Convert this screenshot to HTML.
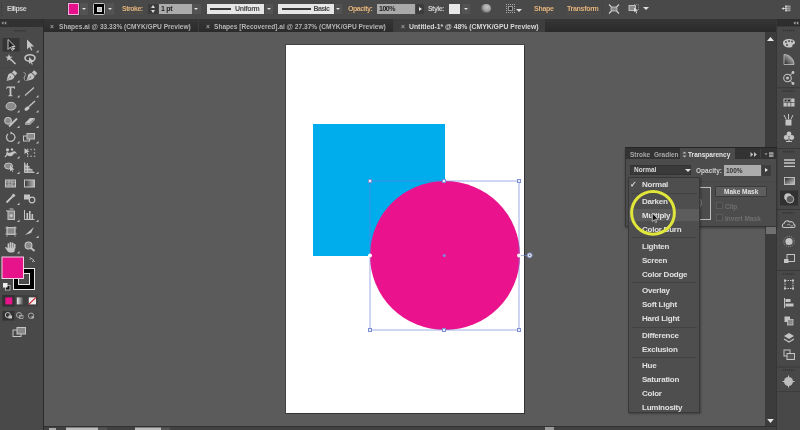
<!DOCTYPE html>
<html><head><meta charset="utf-8">
<style>
*{margin:0;padding:0;box-sizing:border-box}
html,body{width:800px;height:430px;overflow:hidden;background:#575757;font-family:"Liberation Sans",sans-serif;}
.a{position:absolute}
#ctrl{left:0;top:0;width:800px;height:19px;background:#494949}
#tabs{left:0;top:19px;width:800px;height:13px;background:linear-gradient(#363636,#2a2a2a)}
#tool{left:0;top:19px;width:44px;height:411px;background:#494949;border-right:1.5px solid #2c2c2c}
#toolhd{left:0;top:19px;width:43px;height:8px;background:#333}
#canvas{left:44px;top:32px;width:721px;height:394px;background:#5b5b5b}
#artb{left:286px;top:45px;width:238px;height:368px;background:#fff;box-shadow:1px 1px 0 #333,0 0 0 1px #444}
#sq{left:313px;top:124px;width:132px;height:132px;background:#00adec}
#circ{left:370px;top:181px;width:150px;height:149px;border-radius:50%;background:#ea138d}
#vscroll{left:765px;top:32px;width:11px;height:394px;background:#3d3d3d}
#dock{left:776px;top:19px;width:24px;height:411px;background:#4b4b4b;border-left:1px solid #333}
#status{left:44px;top:426px;width:721px;height:4px;background:#3a3a3a}
.t{position:absolute;white-space:nowrap;color:#d8d8d8;font-size:9px;line-height:10px}
#wrap{position:absolute;left:0;top:0;width:800px;height:430px;will-change:transform}
.or{color:#e2b27a}

.dd{background:#535353}
.dd::after{content:"";position:absolute;left:50%;top:50%;margin-left:-2.5px;margin-top:-1px;border-left:2.5px solid transparent;border-right:2.5px solid transparent;border-top:2.5px solid #e0e0e0}
.tri-up{width:0;height:0;border-left:2.5px solid transparent;border-right:2.5px solid transparent;border-bottom:3px solid #d8d8d8}
.tri-dn{width:0;height:0;border-left:2.5px solid transparent;border-right:2.5px solid transparent;border-top:3px solid #d8d8d8}
.tri-dn2{width:0;height:0;border-left:3px solid transparent;border-right:3px solid transparent;border-top:3px solid #e0e0e0}
.tri-r{width:0;height:0;border-top:2.5px solid transparent;border-bottom:2.5px solid transparent;border-left:3px solid #e8e8e8}

.tb{font-size:6.6px;font-weight:bold;color:#b4b4b4;line-height:10px}

.pt{font-size:6.5px;font-weight:bold;line-height:10px}
.mi{font-size:8px;letter-spacing:-0.25px;font-weight:bold;line-height:10px;color:#e0e0e0}
</style></head><body><div id="wrap">
<div id="canvas" class="a"></div>
<div id="artb" class="a"></div>
<div id="sq" class="a"></div>
<div id="circ" class="a"></div>

<!-- selection -->
<svg class="a" style="left:300px;top:170px" width="240" height="170" viewBox="300 170 240 170">
<rect x="370" y="181" width="149" height="149" fill="none" stroke="rgba(100,125,215,0.62)" stroke-width="1"/>
<path d="M520 255.5h7" stroke="rgba(110,135,215,0.6)" stroke-width="1"/>
<g fill="#e8ecf8" stroke="#7d90d6" stroke-width="1">
<rect x="368.5" y="179.5" width="3" height="3"/><rect x="442.5" y="179.5" width="3" height="3"/><rect x="517.5" y="179.5" width="3" height="3"/>
<rect x="368.5" y="328.5" width="3" height="3"/><rect x="442.5" y="328.5" width="3" height="3"/><rect x="517.5" y="328.5" width="3" height="3"/>
</g>
<circle cx="370" cy="255.5" r="2" fill="#fff"/><circle cx="519" cy="255.5" r="2" fill="#f4eef6"/>
<circle cx="529.7" cy="255.3" r="2.4" fill="#dfe5f6" stroke="#8a9dd8" stroke-width=".9"/><circle cx="529.7" cy="255.3" r=".8" fill="#667"/>
<circle cx="444.3" cy="255.5" r="1.6" fill="#8a7fdc"/>
</svg>
<div id="ctrl" class="a"></div>
<!-- control bar -->
<div class="a" style="left:1px;top:3px;width:1px;height:13px;border-left:1px dotted #383838"></div>
<div class="t" style="left:7px;top:4px;font-size:7px;font-weight:bold;letter-spacing:-0.5px;color:#cfcfcf">Ellipse</div>
<div class="a" style="left:68px;top:3px;width:11px;height:12px;background:#e6108b;border:1px solid #efb0dc;box-shadow:0 0 0 .5px #3a3a3a"></div>
<div class="a dd" style="left:80px;top:3px;width:8px;height:12px"></div>
<div class="a" style="left:93px;top:3px;width:12px;height:12px;background:#000;border:1.5px solid #c8c8c8;border-radius:1.5px"></div>
<div class="a" style="left:96.5px;top:6.5px;width:5px;height:5px;background:#b8b8b8;border:.5px solid #ddd"></div>
<div class="a dd" style="left:106px;top:3px;width:8px;height:12px"></div>
<div class="t or" style="left:122px;top:3.5px;font-size:7px;letter-spacing:-0.5px;font-weight:bold;border-bottom:1px dotted #5e5448;line-height:9px">Stroke:</div>
<div class="a" style="left:148px;top:4px;width:10px;height:10px;background:#3c3c3c"></div>
<div class="a tri-up" style="left:151px;top:5px"></div>
<div class="a tri-dn" style="left:151px;top:10px"></div>
<div class="a" style="left:158.5px;top:3.6px;width:33px;height:10.4px;background:#ababab"></div>
<div class="t" style="left:161px;top:3.5px;font-size:7px;letter-spacing:-0.3px;font-weight:bold;color:#222">1 pt</div>
<div class="a dd" style="left:192px;top:4px;width:9px;height:10px"></div>
<div class="a" style="left:207px;top:4px;width:57px;height:10px;background:#e6e6e6"></div>
<div class="a" style="left:210px;top:8px;width:21px;height:2px;background:#3a3a3a"></div>
<div class="t" style="left:235px;top:3.5px;font-size:7px;letter-spacing:-0.35px;font-weight:bold;color:#4a4a4a">Uniform</div>
<div class="a dd" style="left:265px;top:4px;width:8px;height:10px"></div>
<div class="a" style="left:278px;top:4px;width:56px;height:10px;background:#e6e6e6"></div>
<div class="a" style="left:282px;top:8px;width:29px;height:2px;background:#3a3a3a"></div>
<div class="t" style="left:313.5px;top:3.5px;font-size:7px;letter-spacing:-0.6px;font-weight:bold;color:#4a4a4a">Basic</div>
<div class="a dd" style="left:335px;top:4px;width:7px;height:10px"></div>
<div class="t or" style="left:348px;top:3.5px;font-size:7px;letter-spacing:-0.45px;font-weight:bold;border-bottom:1px dotted #5e5448;line-height:9px">Opacity:</div>
<div class="a" style="left:377px;top:4px;width:38px;height:10px;background:#a9a9a9"></div>
<div class="t" style="left:379px;top:3.5px;font-size:7px;letter-spacing:-0.5px;font-weight:bold;color:#222">100%</div>
<div class="a" style="left:416px;top:4px;width:8px;height:10px;background:#3c3c3c"></div>
<div class="a tri-r" style="left:419px;top:7px"></div>
<div class="t" style="left:428px;top:3.5px;font-size:7px;letter-spacing:-0.55px;font-weight:bold;color:#cfcfcf">Style:</div>
<div class="a" style="left:449px;top:4px;width:11px;height:10px;background:#e8e8e8"></div>
<div class="a dd" style="left:462px;top:4px;width:8px;height:10px"></div>
<div class="a" style="left:481px;top:3.5px;width:9.5px;height:9.5px;border-radius:50%;background:radial-gradient(circle at 60% 35%,#c4c4c4,#999 55%,#6a6a6a);box-shadow:inset 1px -1px 1.5px rgba(0,0,0,.35)"></div>
<div class="a" style="left:506px;top:4px;width:9px;height:9px;border:1px dotted #aaa"></div>
<div class="a" style="left:509px;top:7px;width:3px;height:3px;background:#333;box-shadow:0 0 0 1px #999"></div>
<div class="a tri-dn2" style="left:516px;top:8.5px"></div>
<div class="t or" style="left:534px;top:3.5px;font-size:7px;letter-spacing:-0.25px;font-weight:bold;border-bottom:1px dotted #5e5448;line-height:9px">Shape</div>
<div class="t or" style="left:567px;top:3.5px;font-size:7px;letter-spacing:-0.3px;font-weight:bold;border-bottom:1px dotted #5e5448;line-height:9px">Transform</div>
<div class="a" style="left:602px;top:3px;width:1px;height:13px;background:#444"></div>
<svg class="a" style="left:608px;top:4px" width="12" height="10" viewBox="0 0 12 10"><path d="M1 .5l3 3M11 .5l-3 3M1 9.5l3-3M11 9.5l-3-3" stroke="#c8c8c8" stroke-width="1.3"/><rect x="3" y="3" width="6" height="4" rx="1" fill="#8a8a8a" stroke="#c8c8c8" stroke-width=".8"/></svg>
<svg class="a" style="left:628px;top:3px" width="12" height="11" viewBox="0 0 12 11"><rect x="6" y="1.5" width="4.5" height="5.5" fill="none" stroke="#9a9a9a" stroke-width=".8" stroke-dasharray="1 .8"/><rect x="1" y="2.5" width="6.5" height="5" fill="#8a8a8a" stroke="#c8c8c8" stroke-width=".9"/><path d="M6 4.5l4 3.2h-1.8l1 2.3-.9.4-1-2.3-1.3 1.2z" fill="#dcdcdc"/></svg>
<div class="a tri-dn2" style="left:642.5px;top:7px"></div>
<svg class="a" style="left:780px;top:4px" width="12" height="10" viewBox="0 0 12 10"><path d="M1.5 4.5l2.5-1.3v2.6z" fill="#e0e0e0"/><path d="M4 4.5h1" stroke="#bbb" stroke-width="1"/><rect x="5" y="1.5" width="2.6" height="5.8" fill="#d0d0d0"/><rect x="7.9" y="1.5" width="2.6" height="5.8" fill="#9a9a9a"/><path d="M5 3.4h5.5M5 5.4h5.5" stroke="#666" stroke-width=".6"/></svg>

<div id="tabs" class="a"></div>
<!-- tabs -->
<div class="a" style="left:44px;top:19px;width:155px;height:13px;background:linear-gradient(#363636,#2b2b2b);border-right:1px solid #3c3c3c"></div>
<div class="t tb" style="left:50px;top:22px;color:#a0a0a0">&#215;</div>
<div class="t tb" style="left:59px;top:22px">Shapes.ai @ 33.33% (CMYK/GPU Preview)</div>
<div class="a" style="left:200px;top:19px;width:194px;height:13px;background:linear-gradient(#363636,#2b2b2b);border-right:1px solid #3c3c3c"></div>
<div class="t tb" style="left:206px;top:22px;color:#a0a0a0">&#215;</div>
<div class="t tb" style="left:214px;top:22px">Shapes [Recovered].ai @ 27.37% (CMYK/GPU Preview)</div>
<div class="a" style="left:394px;top:19px;width:151px;height:13px;background:#3e3e3e"></div>
<div class="t tb" style="left:401px;top:22px;color:#a0a0a0">&#215;</div>
<div class="t tb" style="left:409px;top:22px;color:#d8d8d8;font-size:6.85px">Untitled-1* @ 48% (CMYK/GPU Preview)</div>

<div id="tool" class="a"></div>

<!-- toolbar -->
<svg class="a" style="left:0;top:19px" width="44" height="411" viewBox="0 19 44 411">
<rect x="0" y="19" width="43" height="8" fill="#313131"/>
<path d="M1.5 23l2-1.8v3.6zM4.3 23l2-1.8v3.6z" fill="#a0a0a0"/>
<path d="M14.5 30.8h11" stroke="#333" stroke-width="1.6" stroke-dasharray="1.2 .8"/>
<rect x="2.5" y="38" width="17" height="13.5" fill="#353535"/>
<!-- selection (group) -->
<path d="M8 39.5v10l2.4-2.4 1.8 3.4 1.2-.6-1.7-3.4h3.4z" fill="#222" stroke="#c4c4c4" stroke-width="1"/>
<path d="M12.5 48.5h2.5M13.7 47.2v2.6" stroke="#c4c4c4" stroke-width=".9"/>
<!-- direct selection -->
<path d="M27 39.5v10l2.4-2.4 1.8 3.4 1.2-.6-1.7-3.4h3.4z" fill="#c4c4c4"/>
<path d="M36 52.5l2.5-2.5v2.5z" fill="#c4c4c4"/>
<!-- magic wand -->
<path d="M9 54l1 2.5 2.5.3-2 1.5.6 2.5-2.1-1.4-2.1 1.4.6-2.5-2-1.5 2.5-.3z" fill="#c4c4c4"/>
<path d="M10.5 59l5 5" stroke="#c4c4c4" stroke-width="1.5"/>
<!-- lasso -->
<ellipse cx="30" cy="58" rx="5" ry="3.3" fill="none" stroke="#c4c4c4" stroke-width="1.6"/>
<path d="M29 57v7l1.6-1.6 1.3 2.4 1-.5-1.2-2.3h2.4z" fill="#c4c4c4"/>
<path d="M1 67.8h42" stroke="#474747" stroke-width="1"/>
<!-- pen -->
<g transform="translate(11.3 76.2) rotate(45)"><path d="M0 6.8L-3.2 1.2Q-3.3-1.8-2-2.3H2Q3.3-1.8 3.2 1.2Z" fill="#c4c4c4"/><rect x="-2.2" y="-6.3" width="4.4" height="3.3" fill="#c4c4c4"/><path d="M-2.2-3.2h4.4" stroke="#777" stroke-width=".5"/><path d="M0 6.3V1.5" stroke="#666" stroke-width=".6"/><circle cx="0" cy="1.2" r=".7" fill="#666"/></g>
<path d="M17 82.5l2.5-2.5v2.5z" fill="#c4c4c4"/>
<!-- curvature pen -->
<g transform="translate(31.3 76.2) rotate(45)"><path d="M0 6.8L-3.2 1.2Q-3.3-1.8-2-2.3H2Q3.3-1.8 3.2 1.2Z" fill="#c4c4c4"/><rect x="-2.2" y="-6.3" width="4.4" height="3.3" fill="#c4c4c4"/><path d="M-2.2-3.2h4.4" stroke="#777" stroke-width=".5"/><path d="M0 6.3V1.5" stroke="#666" stroke-width=".6"/><circle cx="0" cy="1.2" r=".7" fill="#666"/></g>
<path d="M23.5 72.3c2 .5 2.5 2 1.5 3.5s-1.5 3 .5 5" stroke="#aaa" fill="none" stroke-width="1"/>
<!-- type -->
<path d="M7 86.5h8v2.2h-1l-.5-1h-2.1v7.3l1.2.5v.8h-4.2v-.8l1.2-.5v-7.3h-2.1l-.5 1h-1z" fill="#c4c4c4"/>
<path d="M17 97.5l2.5-2.5v2.5z" fill="#c4c4c4"/>
<!-- line -->
<path d="M25 95.5l9-8" stroke="#c4c4c4" stroke-width="1.2"/>
<path d="M36 97.5l2.5-2.5v2.5z" fill="#c4c4c4"/>
<!-- ellipse -->
<ellipse cx="11" cy="106.2" rx="5" ry="3.9" fill="#8a8a8a" stroke="#c4c4c4" stroke-width="1"/>
<path d="M17 112.5l2.5-2.5v2.5z" fill="#c4c4c4"/>
<!-- paintbrush -->
<path d="M29 106.5l6-5.5" stroke="#c4c4c4" stroke-width="1.4"/><ellipse cx="27" cy="108.6" rx="2.8" ry="1.7" transform="rotate(-35 27 108.6)" fill="#c4c4c4"/>
<path d="M36 112.5l2.5-2.5v2.5z" fill="#c4c4c4"/>
<!-- shaper/blob -->
<circle cx="8" cy="120.8" r="3.3" fill="#8a8a8a" stroke="#c4c4c4" stroke-width="1.1"/>
<path d="M9 126.5l8-8" stroke="#c4c4c4" stroke-width="1.8"/>
<path d="M17 128l2.5-2.5v2.5z" fill="#c4c4c4"/>
<!-- eraser -->
<path d="M25 123l5-5h5l-5 5z" fill="#c4c4c4"/><path d="M25 123v2h5l5-5v-2l-5 5z" fill="#9a9a9a"/>
<path d="M36 128l2.5-2.5v2.5z" fill="#c4c4c4"/>
<!-- rotate -->
<path d="M8 134a4.2 4.2 0 1 0 2.8-1" fill="none" stroke="#c4c4c4" stroke-width="1.2"/><path d="M10.5 131.5l1.8 1.6-1.8 1.4z" fill="#c4c4c4"/>
<path d="M17 143.5l2.5-2.5v2.5z" fill="#c4c4c4"/>
<!-- scale -->
<rect x="23.5" y="136" width="6" height="5" fill="none" stroke="#c4c4c4" stroke-width="1"/>
<rect x="27" y="133.5" width="7.5" height="5.5" fill="#8a8a8a" stroke="#c4c4c4" stroke-width="1"/>
<path d="M36 143.5l2.5-2.5v2.5z" fill="#c4c4c4"/>
<!-- warp -->
<circle cx="7.5" cy="149.8" r="1.6" fill="#c4c4c4"/><circle cx="12" cy="149.5" r="1.2" fill="#c4c4c4"/>
<path d="M7 151.5c1 1.5 2 1.5 3.5 1 1.5-.5 2.5-1.5 4-1.2 1.5.3 2.3 1.8 2 3.2-.5-1-1.2-1.6-2-1.2-1 .6-1.5 2.2-3 2.7-1.5.5-3 0-4-.8l-1.8 1.8c-.6.5-1.4 0-1-.6l1.6-1.8c-.3-1.2.3-2.2.7-3.1z" fill="#c4c4c4"/>
<path d="M17 158.5l2.5-2.5v2.5z" fill="#c4c4c4"/>
<!-- free transform -->
<path d="M24.5 148.2l5.2 3.6-2.3.3 1.3 2.6-.9.4-1.3-2.6-2 1.5z" fill="#c4c4c4"/>
<g fill="#aaa"><rect x="27" y="148.8" width="1.4" height="1.4"/><rect x="30.4" y="148.8" width="1.4" height="1.4"/><rect x="33.8" y="148.8" width="1.4" height="1.4"/><rect x="33.8" y="152.2" width="1.4" height="1.4"/><rect x="27" y="155.6" width="1.4" height="1.4"/><rect x="30.4" y="155.6" width="1.4" height="1.4"/><rect x="33.8" y="155.6" width="1.4" height="1.4"/></g>
<!-- shape builder -->
<ellipse cx="8.5" cy="166" rx="4" ry="3" fill="#8a8a8a" stroke="#c4c4c4" stroke-width="1"/>
<path d="M10 165v6.5l1.4-1.4 1 1.8.8-.4-.9-1.7h2z" fill="#c4c4c4"/>
<path d="M17 174l2.5-2.5v2.5z" fill="#c4c4c4"/>
<!-- perspective -->
<path d="M24.5 162.5v10h10z" fill="#9a9a9a"/><path d="M24.5 162.5v10h10M27.5 163v9.5M24.5 166.5h5M24.5 169.5h8" stroke="#c4c4c4" stroke-width=".9" fill="none"/>
<path d="M36 174l2.5-2.5v2.5z" fill="#c4c4c4"/>
<!-- mesh -->
<rect x="5.5" y="180" width="10" height="7" fill="#777" stroke="#c4c4c4" stroke-width="1"/>
<path d="M6 182c2 1 3-1 5 0s3 1 4 0M6 185c2 1 3-1 5 0s3 1 4 0M9 180v7M12 180v7" stroke="#c4c4c4" stroke-width=".7" fill="none"/>
<!-- gradient -->
<defs><linearGradient id="g1" x1="0" x2="1"><stop offset="0" stop-color="#333"/><stop offset="1" stop-color="#bbb"/></linearGradient></defs>
<rect x="24.5" y="180" width="10" height="7" fill="url(#g1)" stroke="#c4c4c4" stroke-width="1"/>
<!-- eyedropper -->
<path d="M6.5 202.5l6-6" stroke="#c4c4c4" stroke-width="1.8"/><path d="M11.5 195.5l2-2 2 2-2 2z" fill="#c4c4c4"/>
<path d="M17 205l2.5-2.5v2.5z" fill="#c4c4c4"/>
<!-- blend -->
<rect x="24" y="194.5" width="6" height="5" fill="#c4c4c4"/><circle cx="32" cy="200" r="2.8" fill="none" stroke="#c4c4c4" stroke-width="1.2"/>
<!-- symbol sprayer -->
<rect x="8" y="211" width="6.5" height="8.5" fill="#8a8a8a" stroke="#c4c4c4" stroke-width="1"/>
<circle cx="11.2" cy="215.5" r="1.6" fill="#c4c4c4"/><path d="M9.5 209h4M6 210.5l2 1" stroke="#c4c4c4" stroke-width="1"/>
<path d="M17 222l2.5-2.5v2.5z" fill="#c4c4c4"/>
<!-- column graph -->
<path d="M24.5 210v9.5h10" stroke="#c4c4c4" fill="none" stroke-width="1"/><rect x="26.5" y="213" width="1.6" height="6" fill="#c4c4c4"/><rect x="29" y="211" width="1.6" height="8" fill="#c4c4c4"/><rect x="31.5" y="214" width="1.6" height="5" fill="#c4c4c4"/>
<path d="M36 222l2.5-2.5v2.5z" fill="#c4c4c4"/>
<!-- artboard -->
<rect x="7" y="227.5" width="8" height="7" fill="#888" stroke="#c4c4c4" stroke-width=".9"/>
<path d="M5 228h12M5 234h12M7 226v11M15 226v11" stroke="#c4c4c4" stroke-width=".6"/>
<!-- slice -->
<path d="M25 235l9-8-3 6z" fill="#c4c4c4"/>
<path d="M36 238l2.5-2.5v2.5z" fill="#c4c4c4"/>
<!-- hand -->
<path d="M7.5 247.5h7.3v2.5c0 1.5-.8 2.5-2.2 2.5h-3c-1 0-1.5-.5-2-1.2l-2.3-3.3c-.4-.7.5-1.3 1.1-.8l1.1 1z" fill="#c4c4c4"/>
<rect x="7.6" y="243.2" width="1.7" height="5" rx=".85" fill="#c4c4c4"/><rect x="9.7" y="242" width="1.7" height="6" rx=".85" fill="#c4c4c4"/><rect x="11.8" y="242.4" width="1.7" height="6" rx=".85" fill="#c4c4c4"/><rect x="13.9" y="243.8" width="1.6" height="5" rx=".8" fill="#c4c4c4"/>
<path d="M17 253.5l2.5-2.5v2.5z" fill="#c4c4c4"/>
<!-- zoom -->
<circle cx="28.5" cy="245.4" r="3.4" fill="#8a8a8a" stroke="#c4c4c4" stroke-width="1.2"/><path d="M31 248l3.5 3" stroke="#c4c4c4" stroke-width="1.8"/>
<!-- fill/stroke -->
<path d="M30.5 258.5c1.5 0 3 .5 3 2.5M32 262l1.5-1.3 1.3 1.3M29.8 257.2l1.3 1.3-1.3 1.3" stroke="#c4c4c4" fill="none" stroke-width=".9"/>
<rect x="13.5" y="268.5" width="21" height="21" fill="#000" stroke="#e8e8e8" stroke-width="1"/>
<rect x="18.5" y="273.5" width="11" height="11" fill="#4b4b4b" stroke="#e8e8e8" stroke-width="1"/>
<rect x="2" y="257" width="21.5" height="21.5" fill="#e6138b" stroke="#f2cfe3" stroke-width="1"/>
<rect x="5.5" y="285.5" width="4.5" height="4.5" fill="#111" stroke="#ccc" stroke-width=".8"/><rect x="3" y="283" width="4.5" height="4.5" fill="#eee"/>
<!-- color mode -->
<rect x="2.5" y="295" width="35.5" height="11.5" fill="#3f3f3f"/>
<rect x="2.5" y="295" width="12" height="11.5" fill="#313131"/>
<rect x="5.3" y="297.4" width="7" height="7" fill="#e6138b"/>
<defs><linearGradient id="g2" x1="0" x2="1"><stop offset="0" stop-color="#eee"/><stop offset="1" stop-color="#333"/></linearGradient></defs>
<rect x="16.8" y="297.4" width="7.2" height="7" fill="url(#g2)"/>
<rect x="28.8" y="297.4" width="7.2" height="7" fill="#eee"/><path d="M28.8 304.4l7.2-7" stroke="#d0202a" stroke-width="1.2"/>
<!-- draw mode -->
<rect x="2.5" y="311" width="35.5" height="9.5" fill="#474747"/>
<rect x="2.5" y="311" width="12" height="9.5" fill="#333"/>
<circle cx="7.8" cy="315" r="2.5" fill="none" stroke="#c4c4c4" stroke-width="1"/><rect x="8.5" y="315.5" width="3.5" height="3" fill="#c4c4c4"/>
<circle cx="19" cy="315" r="2.5" fill="none" stroke="#aaa" stroke-width="1"/><rect x="19.5" y="315.5" width="3.5" height="3" fill="none" stroke="#aaa" stroke-width=".8"/>
<circle cx="31" cy="315.7" r="2.7" fill="none" stroke="#aaa" stroke-width="1"/><rect x="31.5" y="316" width="2.5" height="2.5" fill="#aaa"/>
<!-- screen mode -->
<rect x="13" y="330" width="8" height="6.5" fill="none" stroke="#c4c4c4" stroke-width="1"/>
<rect x="17" y="327.5" width="8.5" height="6.5" fill="#888" stroke="#c4c4c4" stroke-width="1"/>
</svg>


<!-- right dock -->
<svg class="a" style="left:760px;top:19px" width="40" height="411" viewBox="760 19 40 411">
<rect x="765" y="32" width="11" height="394" fill="#3c3c3c"/>
<path d="M767 41l3.5-4 3.5 4z" fill="#e8e8e8"/>
<path d="M767.2 419l3.3 4 3.3-4z" fill="#e8e8e8"/>
<rect x="776" y="19" width="24" height="411" fill="#484848"/>
<rect x="776" y="19" width="1" height="411" fill="#363636"/>
<rect x="777" y="19" width="23" height="7.5" fill="#2e2e2e"/>
<path d="M793.5 23l2-1.8v3.6zM796.3 23l2-1.8v3.6z" fill="#aaa"/>
<path d="M783 30.5h12" stroke="#333" stroke-width="1.6" stroke-dasharray="1.2 .8"/>
<!-- palette -->
<path d="M783 43c0-3 3-4 6-4s6 1.5 6 3.5-2 1.5-2.5 2.5 1 2-2.5 2.5c-3 .3-7-1-7-4.5z" fill="#c4c4c4"/>
<circle cx="786" cy="42" r=".9" fill="#444"/><circle cx="789" cy="41" r=".9" fill="#444"/><circle cx="792" cy="41.5" r=".9" fill="#444"/><circle cx="787" cy="45" r=".9" fill="#444"/>
<!-- color guide -->
<defs><linearGradient id="g3" x1="0" y1="1" x2="1" y2="0"><stop offset="0" stop-color="#222"/><stop offset="1" stop-color="#ddd"/></linearGradient></defs>
<path d="M784 64.5v-10c5.5 0 10 4.5 10 10z" fill="url(#g3)" stroke="#c4c4c4" stroke-width=".8"/>
<!-- kuler -->
<circle cx="787.5" cy="78" r="3.8" fill="none" stroke="#c4c4c4" stroke-width="1.1"/><circle cx="787.5" cy="78" r="1.5" fill="#c4c4c4"/>
<path d="M789.5 76l3-3M789.5 80l3 3" stroke="#c4c4c4" stroke-width="1"/><circle cx="793" cy="72.5" r="1.4" fill="#c4c4c4"/><circle cx="793" cy="83.5" r="1.4" fill="#c4c4c4"/>
<rect x="777" y="87.2" width="23" height="1" fill="#383838"/>
<path d="M783 91h12" stroke="#333" stroke-width="1.6" stroke-dasharray="1.2 .8"/>
<!-- swatches -->
<rect x="783.5" y="98.5" width="11" height="8" fill="#c4c4c4"/>
<path d="M787.2 98.5v8M790.8 98.5v8M783.5 102.5h11" stroke="#555" stroke-width=".8"/>
<rect x="784.5" y="99.5" width="2" height="2" fill="#222"/><rect x="788" y="99.5" width="2" height="2" fill="#222"/>
<!-- brushes -->
<rect x="785.5" y="119.5" width="6" height="6" fill="#c4c4c4"/>
<path d="M786 119l-2-4M788.5 119v-5M791 119l2-4" stroke="#c4c4c4" stroke-width="1"/>
<!-- symbols -->
<circle cx="789" cy="134" r="2.4" fill="#c4c4c4"/><circle cx="786.2" cy="137.5" r="2.4" fill="#c4c4c4"/><circle cx="791.8" cy="137.5" r="2.4" fill="#c4c4c4"/>
<path d="M789 137v4M786 141.5h6" stroke="#c4c4c4" stroke-width="1"/>
<rect x="777" y="148" width="23" height="1" fill="#383838"/>
<path d="M783 151.6h12" stroke="#333" stroke-width="1.6" stroke-dasharray="1.2 .8"/>
<!-- stroke -->
<path d="M784 160h11M784 163h11M784 166.3h11" stroke="#c8c8c8" stroke-width="1.3"/>
<!-- gradient -->
<defs><linearGradient id="g4" x1="0" x2="1" y1="0" y2="1"><stop offset="0" stop-color="#222"/><stop offset="1" stop-color="#ccc"/></linearGradient></defs>
<rect x="784.5" y="177.5" width="10" height="7" fill="url(#g4)" stroke="#c4c4c4" stroke-width=".9"/>
<!-- transparency (active) -->
<rect x="780" y="190.5" width="18" height="15" fill="#313131"/>
<circle cx="788" cy="197" r="3.8" fill="#c4c4c4"/><circle cx="790" cy="199.2" r="3.8" fill="#5a5a5a" stroke="#c4c4c4" stroke-width=".8"/>
<rect x="777" y="209" width="23" height="1" fill="#383838"/>
<path d="M783 213h12" stroke="#333" stroke-width="1.6" stroke-dasharray="1.2 .8"/>
<!-- CC -->
<path d="M784 227.5c-2 0-2.5-3.5 0-4 .5-2.5 4-3.5 5.5-1.5 2-1 4.5.5 4.5 2.5 1.5.5 1.5 3-.5 3z" fill="none" stroke="#c4c4c4" stroke-width="1.1"/>
<path d="M787 225.2c1-1.2 2.2-1.2 3.2 0s2.2 1.2 3.2 0" fill="none" stroke="#c4c4c4" stroke-width=".8"/>
<!-- sun -->
<circle cx="789" cy="241.5" r="3.6" fill="#c4c4c4"/><circle cx="789" cy="241.5" r="5.2" fill="none" stroke="#999" stroke-width="1" stroke-dasharray="1 1"/>
<!-- export -->
<rect x="787" y="254.5" width="7.5" height="7" fill="none" stroke="#c4c4c4" stroke-width="1"/><rect x="784" y="259" width="4.5" height="4" fill="#c4c4c4"/>
<rect x="777" y="270" width="23" height="1" fill="#383838"/>
<path d="M783 274h12" stroke="#333" stroke-width="1.6" stroke-dasharray="1.2 .8"/>
<!-- transform -->
<rect x="785" y="280.5" width="8" height="8" fill="none" stroke="#c4c4c4" stroke-width="1" stroke-dasharray="1.5 1"/>
<rect x="784" y="279.5" width="2" height="2" fill="#c4c4c4"/><rect x="792" y="279.5" width="2" height="2" fill="#c4c4c4"/><rect x="784" y="287.5" width="2" height="2" fill="#c4c4c4"/><rect x="792" y="287.5" width="2" height="2" fill="#c4c4c4"/>
<!-- align -->
<path d="M784.5 298v10" stroke="#c4c4c4" stroke-width="1"/><rect x="785.5" y="299" width="5" height="3" fill="#c4c4c4"/><rect x="785.5" y="303.5" width="8" height="3" fill="#c4c4c4"/>
<!-- pathfinder -->
<rect x="784.5" y="316.5" width="5.5" height="5.5" fill="#c4c4c4"/><rect x="787.5" y="319.5" width="5.5" height="5.5" fill="#888" stroke="#c4c4c4" stroke-width=".8"/>
<!-- layers -->
<path d="M784 336l5-3 5 3-5 3z" fill="#c4c4c4"/><path d="M784 339l5 3 5-3" fill="none" stroke="#c4c4c4" stroke-width="1.2"/>
<!-- artboards -->
<rect x="784" y="350" width="6" height="6" fill="none" stroke="#c4c4c4" stroke-width="1"/><rect x="787" y="353.5" width="7.5" height="6" fill="#555" stroke="#c4c4c4" stroke-width="1"/>
<rect x="777" y="366.5" width="23" height="1" fill="#383838"/>
<path d="M783 370h12" stroke="#333" stroke-width="1.6" stroke-dasharray="1.2 .8"/>
<!-- navigator -->
<circle cx="788.5" cy="381.5" r="4.5" fill="#bdbdbd"/><path d="M788.5 375.5v2M788.5 385.5v2M782.5 381.5h2M792.5 381.5h2" stroke="#c4c4c4" stroke-width="1"/>
<rect x="777" y="391" width="23" height="1" fill="#3c3c3c"/>
</svg>

<!-- transparency panel -->
<div class="a" style="left:625px;top:148px;width:152px;height:79px;background:#4c4c4c;border:1px solid #353535;box-shadow:0 1px 2px rgba(0,0,0,.35)"></div>
<div class="a" style="left:625px;top:147px;width:152px;height:12px;background:#333;border-top:1px solid #262626"></div>
<div class="a" style="left:680px;top:148px;width:55px;height:11px;background:#4a4a4a"></div>
<div class="t pt" style="left:630px;top:150px;color:#a8a8a8">Stroke</div>
<div class="t pt" style="left:654px;top:150px;color:#a8a8a8">Gradien</div>
<svg class="a" style="left:682px;top:151px" width="5" height="7" viewBox="0 0 5 7"><path d="M2.5 .5l2 2h-4zM2.5 6.5l2-2h-4z" fill="#bbb"/></svg>
<div class="t pt" style="left:688px;top:150px;color:#e4e4e4">Transparency</div>
<svg class="a" style="left:749px;top:151px" width="9" height="7" viewBox="0 0 9 7"><path d="M1.5 1l2.8 2.5-2.8 2.5zM5 1l2.8 2.5-2.8 2.5z" fill="#bdbdbd"/></svg>
<div class="a" style="left:760px;top:149px;width:1px;height:9px;background:#444"></div>
<svg class="a" style="left:764px;top:151px" width="11" height="7" viewBox="0 0 11 7"><path d="M.5 2.5h3l-1.5 1.5z" fill="#bbb"/><rect x="5" y="1.2" width="4.5" height="4.8" fill="#9a9a9a"/><path d="M5 3.6h4.5" stroke="#555" stroke-width=".6"/></svg>
<div class="a" style="left:630px;top:165px;width:61px;height:10px;background:#3a3a3a;border:1px solid #333"></div>
<div class="t pt" style="left:634px;top:165px;color:#dadada">Normal</div>

<div class="a tri-dn2" style="left:685px;top:169px"></div>
<div class="t pt" style="left:696px;top:166px;color:#d0d0d0">Opacity:</div>
<div class="a" style="left:724px;top:165px;width:37px;height:11px;background:#acacac"></div>
<div class="t pt" style="left:726px;top:166px;color:#333">100%</div>
<div class="a" style="left:762px;top:165px;width:9px;height:11px;background:#3d3d3d"></div>
<div class="a tri-r" style="left:765px;top:168px"></div>
<div class="a" style="left:626px;top:181px;width:150px;height:1px;background:#474747"></div>
<div class="a" style="left:676px;top:187px;width:35px;height:33px;border:1px solid #bdbdbd;background:#4c4c4c"></div>
<div class="a" style="left:691px;top:197px;width:11px;height:12px;border-radius:50%;border:1px solid #7a7a7a;background:#5a5a5a"></div>
<div class="a" style="left:715px;top:186px;width:52px;height:11px;background:#5e5e5e;border:1px solid #3a3a3a;border-radius:1px"></div>
<div class="t pt" style="left:724px;top:187px;color:#e2e2e2">Make Mask</div>
<div class="a" style="left:716px;top:202px;width:7px;height:7px;border:1px solid #5a5a5a;background:#464646"></div>
<div class="t pt" style="left:725px;top:201.5px;color:#6f6f6f">Clip</div>
<div class="a" style="left:716px;top:214px;width:7px;height:7px;border:1px solid #5a5a5a;background:#464646"></div>
<div class="t pt" style="left:725px;top:213.5px;color:#6f6f6f">Invert Mask</div>
<div class="a" style="left:766px;top:227px;width:10px;height:7px;background:#707070"></div>
<!-- blend menu -->
<div class="a" style="left:628px;top:177px;width:72px;height:236px;background:#4e4e4e;border:1px solid #383838;box-shadow:1px 1px 2px rgba(0,0,0,.3)"></div>
<div class="a" style="left:629px;top:208.5px;width:70px;height:12.5px;background:#5c5c5c"></div>
<div class="t mi" style="left:630px;top:180px;font-size:8px">&#10003;</div>
<div class="t mi" style="left:642px;top:180.0px">Normal</div>
<div class="t mi" style="left:642px;top:197.0px">Darken</div>
<div class="t mi" style="left:642px;top:211.0px">Multiply</div>
<div class="t mi" style="left:642px;top:225.0px">Color Burn</div>
<div class="t mi" style="left:642px;top:241.5px">Lighten</div>
<div class="t mi" style="left:642px;top:255.5px">Screen</div>
<div class="t mi" style="left:642px;top:269.5px">Color Dodge</div>
<div class="t mi" style="left:642px;top:286.0px">Overlay</div>
<div class="t mi" style="left:642px;top:300.0px">Soft Light</div>
<div class="t mi" style="left:642px;top:314.0px">Hard Light</div>
<div class="t mi" style="left:642px;top:331.0px">Difference</div>
<div class="t mi" style="left:642px;top:345.0px">Exclusion</div>
<div class="t mi" style="left:642px;top:361.0px">Hue</div>
<div class="t mi" style="left:642px;top:375.0px">Saturation</div>
<div class="t mi" style="left:642px;top:389.0px">Color</div>
<div class="t mi" style="left:642px;top:403.0px">Luminosity</div>
<div class="a" style="left:632px;top:192.5px;width:65px;height:1px;background:#424242"></div>
<div class="a" style="left:632px;top:237px;width:65px;height:1px;background:#424242"></div>
<div class="a" style="left:632px;top:282px;width:65px;height:1px;background:#424242"></div>
<div class="a" style="left:632px;top:327px;width:65px;height:1px;background:#424242"></div>
<div class="a" style="left:632px;top:357px;width:65px;height:1px;background:#424242"></div>

<!-- highlight circle -->
<svg class="a" style="left:620px;top:180px" width="70" height="65" viewBox="620 180 70 65">
<circle cx="653" cy="212.8" r="21.4" fill="none" stroke="#e0e63a" stroke-width="3"/>
<path d="M652.3 213v8.5l2-1.8 1.4 3 1-.5-1.3-2.9h2.8z" fill="#111" stroke="#ddd" stroke-width=".7"/>
</svg>
<!-- status bar -->
<svg class="a" style="left:0;top:425px" width="800" height="5" viewBox="0 425 800 5">
<rect x="44" y="426" width="732" height="4" fill="#414141"/><rect x="44" y="426" width="732" height=".8" fill="#2e2e2e"/>
<rect x="49" y="428" width="7" height="2" fill="#aaa"/>
<rect x="66" y="427.5" width="32" height="3" fill="#bdbdbd"/><rect x="98" y="427.5" width="9" height="3" fill="#555"/>
<rect x="135" y="427.5" width="26" height="3" fill="#bdbdbd"/><rect x="161" y="427.5" width="9" height="3" fill="#555"/>
<rect x="545" y="427" width="9" height="3" fill="#9a9a9a"/>
</svg>

</div></body></html>
